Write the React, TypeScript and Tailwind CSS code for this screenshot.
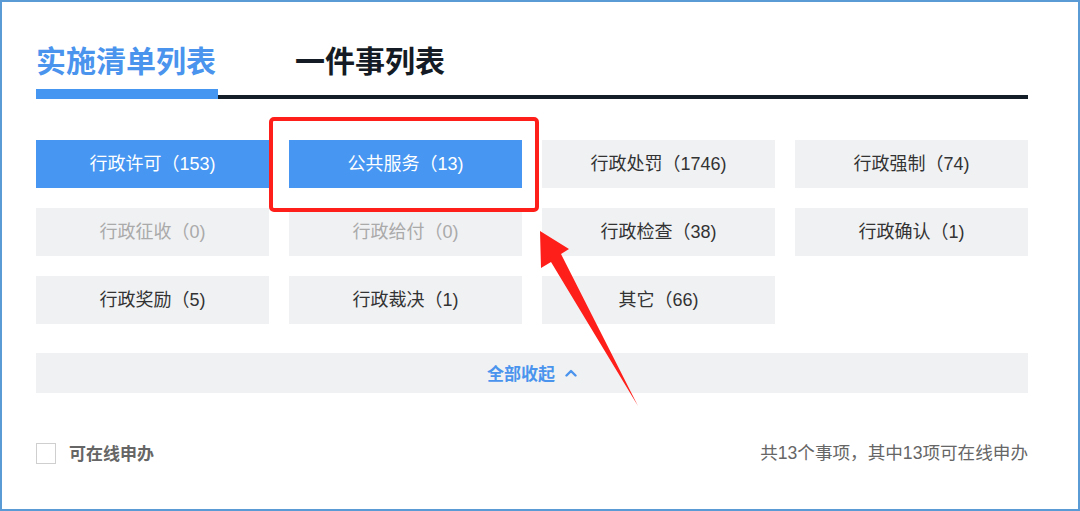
import React from "react";

type Item = { label: string; active?: boolean; disabled?: boolean };

const items: Item[] = [
  { label: "行政许可（153)", active: true },
  { label: "公共服务（13)", active: true },
  { label: "行政处罚（1746)" },
  { label: "行政强制（74)" },
  { label: "行政征收（0)", disabled: true },
  { label: "行政给付（0)", disabled: true },
  { label: "行政检查（38)" },
  { label: "行政确认（1)" },
  { label: "行政奖励（5)" },
  { label: "行政裁决（1)" },
  { label: "其它（66)" },
];

const font = { fontFamily: '"Liberation Sans", "Noto Sans CJK SC", sans-serif' };

export default function App() {
  return (
    <div
      className="relative w-[1080px] h-[511px] overflow-hidden bg-white border-2 border-[#5b9bd5] pl-[34px] pr-[50px]"
      style={font}
    >
      {/* Tabs */}
      <div className="flex pt-[37px] font-['Noto_Sans_CJK_SC',sans-serif]">
        <div className="w-[182px] text-[30px] leading-[40px] font-bold text-[#4a94ee] whitespace-nowrap">
          实施清单列表
        </div>
        <div className="ml-[77px] text-[30px] leading-[40px] font-bold text-[#141b24] whitespace-nowrap">
          一件事列表
        </div>
      </div>
      <div className="flex items-end mt-[10px] h-[10px]">
        <div className="w-[182px] h-[10px] bg-[#4596f0]" />
        <div className="flex-1 h-[4px] bg-[#141e28]" />
      </div>

      {/* Grid */}
      <div className="grid grid-cols-4 gap-5 mt-[41px]">
        {items.map((it) => (
          <div
            key={it.label}
            className={
              "h-[48px] flex items-center justify-center text-[18px] whitespace-nowrap " +
              (it.active
                ? "bg-[#4696f2] text-white"
                : it.disabled
                ? "bg-[#f0f1f3] text-[#aaaaaa]"
                : "bg-[#f0f1f3] text-[#333333]")
            }
          >
            {it.label}
          </div>
        ))}
      </div>

      {/* Collapse bar */}
      <div className="mt-[29px] h-[40px] bg-[#f0f1f3] flex items-center justify-center gap-[10px] text-[#4a94ee]">
        <span className="text-[17px] font-bold font-['Noto_Sans_CJK_SC',sans-serif]">全部收起</span>
        <svg width="12" height="8" viewBox="0 0 12 8" fill="none">
          <path d="M1.5 6.5 L6 2 L10.5 6.5" stroke="#4a94ee" strokeWidth="2.4" strokeLinecap="round" strokeLinejoin="round" />
        </svg>
      </div>

      {/* Footer */}
      <div className="mt-[47px] flex items-center justify-between">
        <div className="flex items-center">
          <div className="w-[20px] h-[21px] border border-[#cfcfcf] bg-white" />
          <span className="ml-[13px] text-[17px] font-bold text-[#666666] font-['Noto_Sans_CJK_SC',sans-serif]">可在线申办</span>
        </div>
        <div className="text-[17.6px] text-[#666666] whitespace-nowrap">共13个事项，其中13项可在线申办</div>
      </div>

      {/* Annotation: red box */}
      <div className="absolute left-[267px] top-[115px] w-[270px] h-[95px] border-4 border-[#ff1f1a] rounded-[5px]" />

      {/* Annotation: red arrow */}
      <svg className="absolute -left-[2px] -top-[2px] pointer-events-none" width="1080" height="511" viewBox="0 0 1080 511">
        <polygon points="540,231 569,249 561,254 638,406 551,262 541,268" fill="#ff1f1a" />
      </svg>
    </div>
  );
}
